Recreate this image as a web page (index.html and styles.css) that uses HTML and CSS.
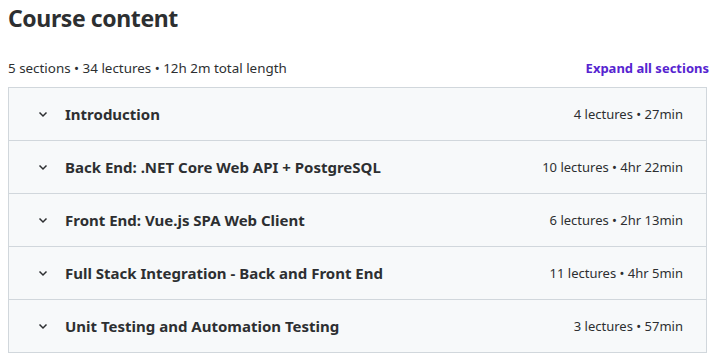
FILE: index.html
```html
<!DOCTYPE html>
<html lang="en">
<head>
    <meta charset="UTF-8">
    <title>Course content</title>
    <link rel="stylesheet" href="styles.css">
</head>
<body>
    <div class="curriculum">
        <h2 class="curriculum-title">Course content</h2>

        <div class="curriculum-meta">
            <span>5 sections &bull; 34 lectures &bull; 12h 2m total length</span>
            <a href="#" class="expand-link">Expand all sections</a>
        </div>

        <div class="sections">
            <div class="section-row">
                <svg class="chevron" viewBox="0 0 12 12"><path d="M2.5 4.5 6 8l3.5-3.5"/></svg>
                <span class="section-name">Introduction</span>
                <span class="section-info">4 lectures &bull; 27min</span>
            </div>
            <div class="section-row">
                <svg class="chevron" viewBox="0 0 12 12"><path d="M2.5 4.5 6 8l3.5-3.5"/></svg>
                <span class="section-name">Back End: .NET Core Web API + PostgreSQL</span>
                <span class="section-info">10 lectures &bull; 4hr 22min</span>
            </div>
            <div class="section-row">
                <svg class="chevron" viewBox="0 0 12 12"><path d="M2.5 4.5 6 8l3.5-3.5"/></svg>
                <span class="section-name">Front End: Vue.js SPA Web Client</span>
                <span class="section-info">6 lectures &bull; 2hr 13min</span>
            </div>
            <div class="section-row">
                <svg class="chevron" viewBox="0 0 12 12"><path d="M2.5 4.5 6 8l3.5-3.5"/></svg>
                <span class="section-name">Full Stack Integration - Back and Front End</span>
                <span class="section-info">11 lectures &bull; 4hr 5min</span>
            </div>
            <div class="section-row">
                <svg class="chevron" viewBox="0 0 12 12"><path d="M2.5 4.5 6 8l3.5-3.5"/></svg>
                <span class="section-name">Unit Testing and Automation Testing</span>
                <span class="section-info">3 lectures &bull; 57min</span>
            </div>
        </div>
    </div>
</body>
</html>
```

FILE: styles.css
```css
body {
    margin: 0;
    padding: 0 8px;
    font-family: 'Noto Sans', 'Open Sans', sans-serif;
    color: #2d2f31;
    background: #fff;
}

a {
    text-decoration: none;
    color: inherit;
}

.curriculum-title {
    margin: 0;
    font-size: 23px;
    font-weight: 700;
    line-height: 36px;
    letter-spacing: -0.4px;
}

.curriculum-meta {
    display: flex;
    justify-content: space-between;
    align-items: center;
    margin-top: 20px;
    height: 24px;
    font-size: 13.4px;
    margin-bottom: 7px;
}

.expand-link {
    color: #5624d0;
    font-weight: 700;
    font-size: 13px;
}

.sections {
    border: 1px solid #d1d7dc;
    margin-right: 2px;
}

.section-row {
    display: flex;
    align-items: center;
    height: 52px;
    padding: 0 23px 0 28px;
    background: #f7f9fa;
    border-bottom: 1px solid #d1d7dc;
}

.section-row:last-child {
    border-bottom: none;
}

.chevron {
    width: 12px;
    height: 12px;
    margin-right: 16px;
    fill: none;
    stroke: #2d2f31;
    stroke-width: 1.5;
}

.section-name {
    flex: 1;
    font-size: 15px;
    font-weight: 700;
}

.section-info {
    font-size: 13px;
}
```
